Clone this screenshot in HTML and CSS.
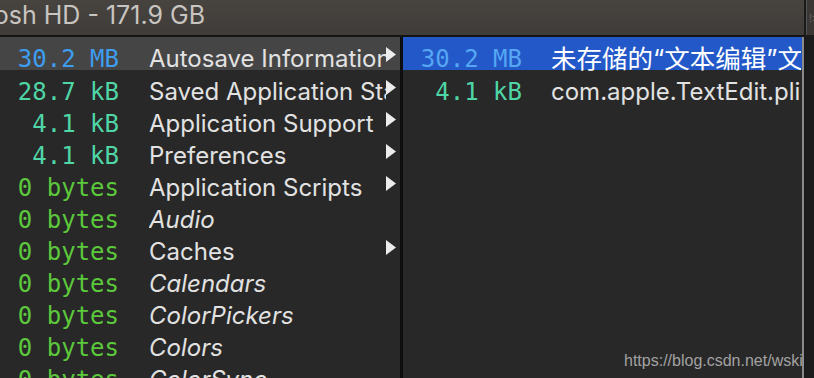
FILE: index.html
```html
<!DOCTYPE html>
<html lang="en">

<head>
    <meta charset="UTF-8">
    <meta name="viewport" content="width=device-width, initial-scale=1.0">
    <title>Disk Usage</title>
    <link rel="stylesheet" href="styles.css">
</head>

<body>
<div class="window">
  <div class="main">
    <header class="titlebar">
      <div class="title-clip"><span class="title">Macintosh HD - 171.9 GB</span></div>
    </header>

    <div class="browser">
      <ul class="column col-left">
        <li class="row dim-selected"><span class="size mb">30.2 MB</span><span class="name">Autosave Information</span><span class="arrow"><svg width="10" height="15" viewBox="0 0 10 15"><polygon points="0,0 10,7.5 0,15"/></svg></span></li>
        <li class="row"><span class="size kb">28.7 kB</span><span class="name">Saved Application State</span><span class="arrow"><svg width="10" height="15" viewBox="0 0 10 15"><polygon points="0,0 10,7.5 0,15"/></svg></span></li>
        <li class="row"><span class="size kb">4.1 kB</span><span class="name">Application Support</span><span class="arrow"><svg width="10" height="15" viewBox="0 0 10 15"><polygon points="0,0 10,7.5 0,15"/></svg></span></li>
        <li class="row"><span class="size kb">4.1 kB</span><span class="name">Preferences</span><span class="arrow"><svg width="10" height="15" viewBox="0 0 10 15"><polygon points="0,0 10,7.5 0,15"/></svg></span></li>
        <li class="row"><span class="size bytes">0 bytes</span><span class="name">Application Scripts</span><span class="arrow"><svg width="10" height="15" viewBox="0 0 10 15"><polygon points="0,0 10,7.5 0,15"/></svg></span></li>
        <li class="row"><span class="size bytes">0 bytes</span><span class="name link">Audio</span><span class="arrow"></span></li>
        <li class="row"><span class="size bytes">0 bytes</span><span class="name">Caches</span><span class="arrow"><svg width="10" height="15" viewBox="0 0 10 15"><polygon points="0,0 10,7.5 0,15"/></svg></span></li>
        <li class="row"><span class="size bytes">0 bytes</span><span class="name link">Calendars</span><span class="arrow"></span></li>
        <li class="row"><span class="size bytes">0 bytes</span><span class="name link">ColorPickers</span><span class="arrow"></span></li>
        <li class="row"><span class="size bytes">0 bytes</span><span class="name link">Colors</span><span class="arrow"></span></li>
        <li class="row"><span class="size bytes">0 bytes</span><span class="name link">ColorSync</span><span class="arrow"></span></li>
      </ul>

      <div class="divider"></div>

      <ul class="column col-right">
        <li class="row selected"><span class="size mb">30.2 MB</span><span class="name cjk">未存储的“文本编辑”文稿.rtf</span></li>
        <li class="row"><span class="size kb">4.1 kB</span><span class="name">com.apple.TextEdit.plist</span></li>
      </ul>

      <span class="watermark">https://blog.csdn.net/wskii</span>
    </div>
  </div>

  <div class="edge">
    <div class="edge-top"><span class="edge-mark">!:</span></div>
  </div>
</div>
</body>

</html>
```

FILE: styles.css
```css
body {
    margin: 0;
    background: #1b1b1b;
    overflow: hidden;
    font-family: Inter, "Liberation Sans", sans-serif;
}

.window {
    display: flex;
    width: 814px;
    height: 378px;
}

.main {
    display: flex;
    flex-direction: column;
    width: 804px;
    border-right: 2px solid #1a1a1a;
}

/* title bar, title is cut off on the left */
.titlebar {
    height: 35px;
    background: linear-gradient(#47433f, #403c39);
    border-bottom: 2px solid #151515;
}

.title-clip {
    display: flex;
    justify-content: flex-end;
    width: 205px;
    overflow: hidden;
    white-space: nowrap;
}

.title {
    flex: none;
    color: #c8c5c1;
    font-size: 25px;
    line-height: 31px;
}

.browser {
    position: relative;
    flex: 1;
    display: flex;
    background: #282828;
    overflow: hidden;
}

.column {
    list-style: none;
    margin: 0;
    padding: 0;
}

.col-left {
    width: 400px;
}

.col-right {
    flex: 1;
    min-width: 0;
    border-right: 2px solid #8a8a8a;
}

.divider {
    width: 3px;
    background: #0e0e0e;
}

.row {
    display: flex;
    align-items: flex-start;
    height: 32px;
    box-sizing: border-box;
    padding-top: 6px;
    line-height: 32px;
    white-space: nowrap;
}

.row:first-child {
    height: 33px;
}

.dim-selected {
    background: #454545;
}

.selected {
    background: #2358c8;
}

.size {
    flex: none;
    width: 119px;
    text-align: right;
    font-family: "DejaVu Sans Mono", monospace;
    font-size: 24px;
}

.mb {
    color: #3d9df0;
}

.selected .mb {
    color: #56a6f3;
}

.kb {
    color: #4fd6a6;
}

.bytes {
    color: #5cc83c;
}

.name {
    flex: 1;
    min-width: 0;
    overflow-x: clip;
    margin-left: 30px;
    color: #e2e2e2;
    font-size: 24px;
}

.selected .name {
    color: #ffffff;
}

.name.link {
    font-style: italic;
}

.name.cjk {
    font-family: Inter, "Noto Sans CJK SC", sans-serif;
    font-size: 25.5px;
}

.col-right .name {
    margin-left: 29px;
    margin-right: 1px;
}

.arrow {
    flex: none;
    width: 14px;
    margin-top: 4px;
}

.arrow svg {
    display: block;
    fill: #ececec;
}

.watermark {
    position: absolute;
    right: 0;
    bottom: 8px;
    color: #a2a2a2;
    font-family: "Liberation Sans", sans-serif;
    font-size: 16px;
    white-space: nowrap;
    overflow: hidden;
    width: 180px;
}

.edge {
    flex: 1;
    background: #1c1c1c;
}

.edge-top {
    height: 35px;
    background: #3a3734;
    border-left: 1px solid #555;
}

.edge-mark {
    display: block;
    padding: 12px 0 0 2px;
    color: #6a6661;
    font-size: 10px;
}
```
